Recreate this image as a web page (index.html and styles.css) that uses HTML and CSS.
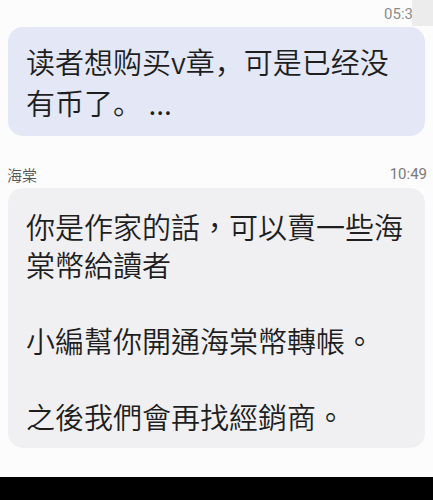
FILE: index.html
```html
<!DOCTYPE html>
<html>
<head>
  <meta charset="utf-8">
  <title>Chat</title>
  <link rel="stylesheet" href="styles.css">
</head>
<body>
  <div class="chat">
    <div class="top-time">05:3</div>
    <div class="cover"></div>

    <div class="bubble sent">
      <p>读者想购买v章，可是已经没有币了。 ...</p>
    </div>

    <div class="meta">
      <span class="sender">海棠</span>
      <span class="time">10:49</span>
    </div>

    <div class="bubble received">
      <p>你是作家的話，可以賣一些海棠幣給讀者</p>
      <p>小編幫你開通海棠幣轉帳。</p>
      <p>之後我們會再找經銷商。</p>
    </div>
  </div>

  <div class="bottom-bar"></div>
</body>
</html>
```

FILE: styles.css
```css
body {
    margin: 0;
    padding: 0;
    width: 433px;
    height: 500px;
    overflow: hidden;
    background-color: #fcfcfc;
    color: #1e1e1e;
    font-family: "Noto Sans CJK SC", "Noto Sans", sans-serif;
    display: flex;
    flex-direction: column;
}

.chat {
    position: relative;
    flex: 1;
    padding: 0 8px;
}

.top-time {
    height: 27px;
    line-height: 28px;
    text-align: right;
    padding-right: 12px;
    font-family: Roboto, sans-serif;
    font-size: 15px;
    color: #8c8c8c;
    overflow: hidden;
}

/* grey block covering the cut-off clock at the right edge */
.cover {
    position: absolute;
    top: 0;
    right: 0;
    width: 21px;
    height: 26px;
    background-color: #ececec;
}

.bubble {
    border-radius: 15px;
    padding: 0 10px 0 18px;
}

.bubble p {
    margin: 0;
    font-size: 29px;
    font-weight: 350;
}

.sent {
    background-color: #e3e7f6;
    padding-top: 14px;
    padding-bottom: 13px;
}

.sent p {
    line-height: 41px;
}

.meta {
    display: flex;
    justify-content: space-between;
    align-items: center;
    height: 20px;
    margin: 28px 0 4px;
}

.sender {
    font-size: 15px;
    font-weight: 350;
    color: #555;
    margin-left: -1px;
}

.time {
    font-family: Roboto, sans-serif;
    font-size: 15px;
    color: #7a7a7a;
    margin-right: -2px;
}

.received {
    background-color: #f0f0f2;
    padding-top: 19px;
    padding-bottom: 13px;
}

.received p {
    line-height: 38px;
    font-family: "Noto Sans CJK TC", sans-serif;
}

.received p + p {
    margin-top: 38px;
}

.bottom-bar {
    height: 23px;
    background-color: #000;
}
```
